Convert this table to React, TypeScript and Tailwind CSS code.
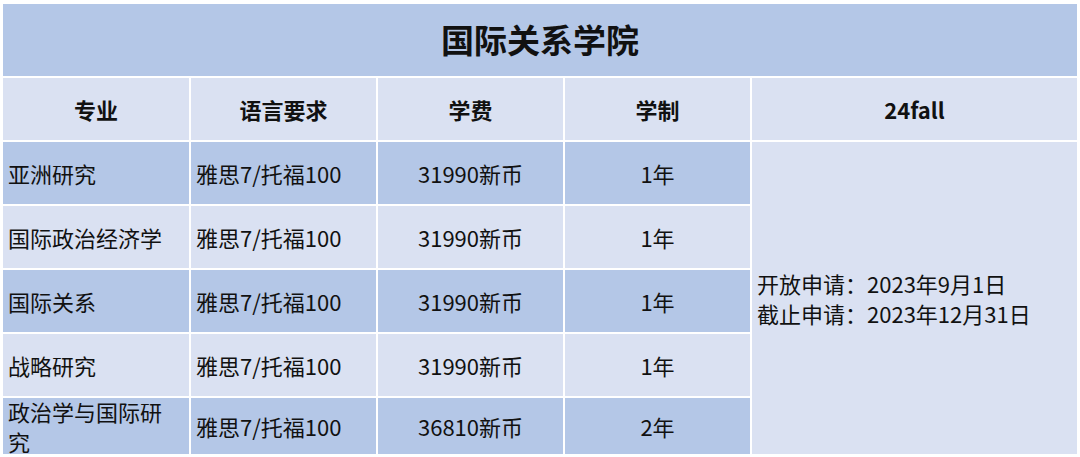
const rows = [
  { name: '亚洲研究', lang: '雅思7/托福100', fee: '31990新币', dur: '1年' },
  { name: '国际政治经济学', lang: '雅思7/托福100', fee: '31990新币', dur: '1年' },
  { name: '国际关系', lang: '雅思7/托福100', fee: '31990新币', dur: '1年' },
  { name: '战略研究', lang: '雅思7/托福100', fee: '31990新币', dur: '1年' },
  { name: '政治学与国际研究', lang: '雅思7/托福100', fee: '36810新币', dur: '2年' },
]

const font = { fontFamily: '"Noto Sans CJK SC", "Noto Sans", sans-serif' }

const App = () => {
  return (
    <div className="min-h-screen w-[1080px] bg-white pl-[3px] pt-[4px] text-[#111]" style={font}>
      <div className="grid w-[1074px] grid-cols-[186px_185px_185px_185px_325px] grid-rows-[72px_62px_62px_62px_62px_62px_56px] gap-[2px]">
        {/* title */}
        <div className="col-span-5 flex items-center justify-center bg-[#b4c7e7] text-[33px] font-bold">
          国际关系学院
        </div>

        {/* header */}
        {['专业', '语言要求', '学费', '学制', '24fall'].map((h) => (
          <div key={h} className="flex items-center justify-center bg-[#dae1f2] text-[22px] font-bold">
            {h}
          </div>
        ))}

        {rows.map((r, i) => {
          const bg = i % 2 === 0 ? 'bg-[#b4c7e7]' : 'bg-[#dae1f2]'
          return [
            <div
              key={`n${i}`}
              className={`${bg} flex items-center pl-[5px] text-[22px] leading-[30px]`}
              style={{ gridRow: i + 3, gridColumn: 1 }}
            >
              <span className="w-[170px]">{r.name}</span>
            </div>,
            <div
              key={`l${i}`}
              className={`${bg} flex items-center pl-[5px] text-[22px]`}
              style={{ gridRow: i + 3, gridColumn: 2 }}
            >
              {r.lang}
            </div>,
            <div
              key={`f${i}`}
              className={`${bg} flex items-center justify-center text-[22px]`}
              style={{ gridRow: i + 3, gridColumn: 3 }}
            >
              {r.fee}
            </div>,
            <div
              key={`d${i}`}
              className={`${bg} flex items-center justify-center text-[22px]`}
              style={{ gridRow: i + 3, gridColumn: 4 }}
            >
              {r.dur}
            </div>,
          ]
        })}

        {/* merged 24fall cell */}
        <div className="col-start-5 row-start-3 row-span-5 flex flex-col justify-center bg-[#dae1f2] pl-[5px] text-[22px] leading-[30px]">
          <div>开放申请：2023年9月1日</div>
          <div>截止申请：2023年12月31日</div>
        </div>
      </div>
    </div>
  )
}

export default App
